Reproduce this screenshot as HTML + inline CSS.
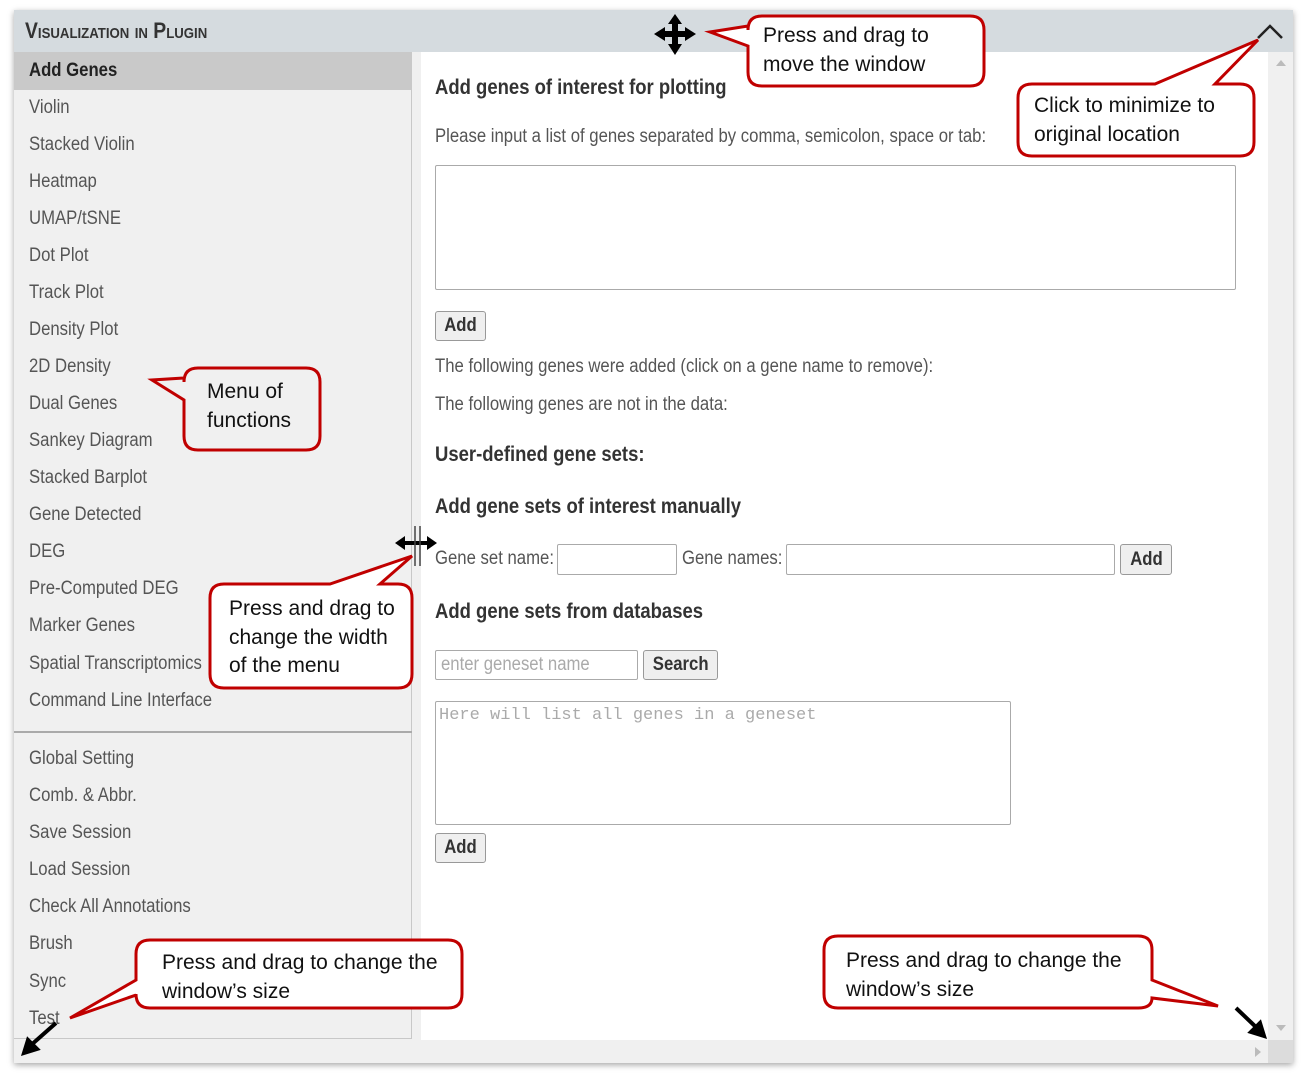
<!DOCTYPE html>
<html><head><meta charset="utf-8"><style>
*{margin:0;padding:0;box-sizing:border-box}
body{width:1306px;height:1080px;background:#fff;position:relative;overflow:hidden;font-family:"Liberation Sans",sans-serif;color:#444}
.a{position:absolute;white-space:nowrap}
.s{transform:scaleX(.88);transform-origin:0 0}
.win{position:absolute;left:14px;top:10px;width:1279px;height:1053px;background:#f0f0f0;box-shadow:0 2px 6px rgba(0,0,0,.35)}
.hdr{position:absolute;left:14px;top:10px;width:1279px;height:42px;background:#d5dbdf}
.menu{position:absolute;left:14px;top:52px;width:398px;height:987px;background:#f0f0f0;border-right:1px solid #c8c8c8;border-bottom:1px solid #c8c8c8}
.content{position:absolute;left:421px;top:52px;width:847px;height:988px;background:#fff}
.mi{position:absolute;left:29px;font-size:19px;color:#555;transform:scaleX(.88);transform-origin:0 0}
.t{font-size:19px;color:#555}
.h{font-size:21px;font-weight:bold;color:#333}
.box{position:absolute;border:1px solid #aaa;background:#fff;border-radius:2px}
.btn{position:absolute;border:1px solid #999;background:#efefef;border-radius:3px;font-weight:bold;color:#333;text-align:center}
.btn span{display:inline-block;font-size:19px;transform:scaleX(.88)}
</style></head><body>
<div class="win"></div>
<div class="hdr"></div>
<div class="a s" style="left:25px;top:18px;font-size:22px;font-weight:bold;color:#333;font-variant:small-caps">Visualization in Plugin</div>
<div class="menu"></div>
<div class="a" style="left:14px;top:52px;width:398px;height:38px;background:#c9c9c9"></div>
<div class="mi a" style="top:60px;color:#222;font-weight:bold">Add Genes</div>
<div class="mi a" style="top:97px">Violin</div>
<div class="mi a" style="top:134px">Stacked Violin</div>
<div class="mi a" style="top:171px">Heatmap</div>
<div class="mi a" style="top:208px">UMAP/tSNE</div>
<div class="mi a" style="top:245px">Dot Plot</div>
<div class="mi a" style="top:282px">Track Plot</div>
<div class="mi a" style="top:319px">Density Plot</div>
<div class="mi a" style="top:356px">2D Density</div>
<div class="mi a" style="top:393px">Dual Genes</div>
<div class="mi a" style="top:430px">Sankey Diagram</div>
<div class="mi a" style="top:467px">Stacked Barplot</div>
<div class="mi a" style="top:504px">Gene Detected</div>
<div class="mi a" style="top:541px">DEG</div>
<div class="mi a" style="top:578px">Pre-Computed DEG</div>
<div class="mi a" style="top:615px">Marker Genes</div>
<div class="mi a" style="top:653px">Spatial Transcriptomics</div>
<div class="mi a" style="top:690px">Command Line Interface</div>
<div class="a" style="left:14px;top:731px;width:398px;height:2px;background:#aaa"></div>
<div class="mi a" style="top:748px">Global Setting</div>
<div class="mi a" style="top:785px">Comb. &amp; Abbr.</div>
<div class="mi a" style="top:822px">Save Session</div>
<div class="mi a" style="top:859px">Load Session</div>
<div class="mi a" style="top:896px">Check All Annotations</div>
<div class="mi a" style="top:933px">Brush</div>
<div class="mi a" style="top:971px">Sync</div>
<div class="mi a" style="top:1008px">Test</div>
<div class="content"></div>
<div class="a" style="left:1268px;top:52px;width:25px;height:988px;background:#f0f0f0"></div>
<div class="a" style="left:1268px;top:1040px;width:25px;height:23px;background:#dcdcdc"></div>
<div class="a" style="left:1276px;top:60px;width:0;height:0;border-left:5px solid transparent;border-right:5px solid transparent;border-bottom:6px solid #bbb"></div>
<div class="a" style="left:1276px;top:1025px;width:0;height:0;border-left:5px solid transparent;border-right:5px solid transparent;border-top:6px solid #bbb"></div>
<div class="a" style="left:1255px;top:1047px;width:0;height:0;border-top:5px solid transparent;border-bottom:5px solid transparent;border-left:6px solid #bbb"></div>

<div class="a h s" style="left:435px;top:76px">Add genes of interest for plotting</div>
<div class="a t s" style="left:435px;top:126px">Please input a list of genes separated by comma, semicolon, space or tab:</div>
<div class="box" style="left:435px;top:165px;width:801px;height:125px"></div>
<div class="btn" style="left:435px;top:311px;width:51px;height:30px;line-height:28px"><span>Add</span></div>
<div class="a t s" style="left:435px;top:356px">The following genes were added (click on a gene name to remove):</div>
<div class="a t s" style="left:435px;top:394px">The following genes are not in the data:</div>
<div class="a h s" style="left:435px;top:443px">User-defined gene sets:</div>
<div class="a h s" style="left:435px;top:495px">Add gene sets of interest manually</div>
<div class="a t s" style="left:435px;top:548px">Gene set name:</div>
<div class="box" style="left:557px;top:544px;width:120px;height:31px"></div>
<div class="a t s" style="left:682px;top:548px">Gene names:</div>
<div class="box" style="left:786px;top:544px;width:329px;height:31px"></div>
<div class="btn" style="left:1120px;top:544px;width:52px;height:31px;line-height:29px"><span>Add</span></div>
<div class="a h s" style="left:435px;top:600px">Add gene sets from databases</div>
<div class="box" style="left:435px;top:650px;width:203px;height:30px"></div>
<div class="a t s" style="left:441px;top:654px;color:#aaa">enter geneset name</div>
<div class="btn" style="left:643px;top:650px;width:75px;height:30px;line-height:28px"><span>Search</span></div>
<div class="box" style="left:435px;top:701px;width:576px;height:124px"></div>
<div class="a" style="left:439px;top:706px;font-family:'Liberation Mono',monospace;font-size:17px;color:#aaa">Here will list all genes in a geneset</div>
<div class="btn" style="left:435px;top:833px;width:51px;height:30px;line-height:28px"><span>Add</span></div>

<svg class="a" style="left:0;top:0" width="1306" height="1080">
<g fill="#fff" stroke="#c00000" stroke-width="3" stroke-linejoin="miter">
<path d="M762,16 H970 Q984,16 984,30 V72 Q984,86 970,86 H762 Q748,86 748,72 V46 L710,32 L748,26 V30 Q748,16 762,16 Z"/>
<path d="M1032,84 H1155 L1258,40 L1215,84 H1240 Q1254,84 1254,98 V142 Q1254,156 1240,156 H1032 Q1018,156 1018,142 V98 Q1018,84 1032,84 Z"/>
<path fill="none" d="M198,368 H306 Q320,368 320,382 V436 Q320,450 306,450 H198 Q184,450 184,436 V400 L152,380 L184,378 V382 Q184,368 198,368 Z"/>
<path d="M224,584 H330 L412,556 L380,584 H398 Q412,584 412,598 V674 Q412,688 398,688 H224 Q210,688 210,674 V598 Q210,584 224,584 Z"/>
<path d="M150,940 H448 Q462,940 462,954 V994 Q462,1008 448,1008 H150 Q136,1008 136,994 V995 L70,1018 L136,980 V954 Q136,940 150,940 Z"/>
<path d="M838,936 H1138 Q1152,936 1152,950 V980 L1218,1006 L1152,998 Q1152,1008 1138,1008 H838 Q824,1008 824,994 V950 Q824,936 838,936 Z"/>
</g>
<g fill="#000">
<path d="M675,14 L682,24 H678 V31 H685 V27 L696,34 L685,41 V37 H678 V44 H682 L675,55 L668,44 H672 V37 H665 V41 L654,34 L665,27 V31 H672 V24 H668 Z"/>
<path d="M395,543 L405,536 V541 H427 V536 L437,543 L427,550 V545 H405 V550 Z"/>
<path d="M56,1023 L30,1046 M24,1053 L28,1040 L37,1049 Z" stroke="#000" stroke-width="4"/>
<path d="M1236,1008 L1258,1029 M1264,1036 L1251,1032 L1260,1023 Z" stroke="#000" stroke-width="4"/>
</g>
<path d="M1258,38 L1270,26 L1282,38" fill="none" stroke="#222" stroke-width="2.5"/>
<path d="M415,526 V566 M420,526 V566" stroke="#444" stroke-width="1.5"/>
<g font-family="Liberation Sans, sans-serif" font-size="21" fill="#111">
<text x="763" y="42">Press and drag to</text>
<text x="763" y="71">move the window</text>
<text x="1034" y="112">Click to minimize to</text>
<text x="1034" y="141">original location</text>
<text x="207" y="398">Menu of</text>
<text x="207" y="427">functions</text>
<text x="229" y="615">Press and drag to</text>
<text x="229" y="644">change the width</text>
<text x="229" y="672">of the menu</text>
<text x="162" y="969">Press and drag to change the</text>
<text x="162" y="998">window’s size</text>
<text x="846" y="967">Press and drag to change the</text>
<text x="846" y="996">window’s size</text>
</g>
</svg>
</body></html>
